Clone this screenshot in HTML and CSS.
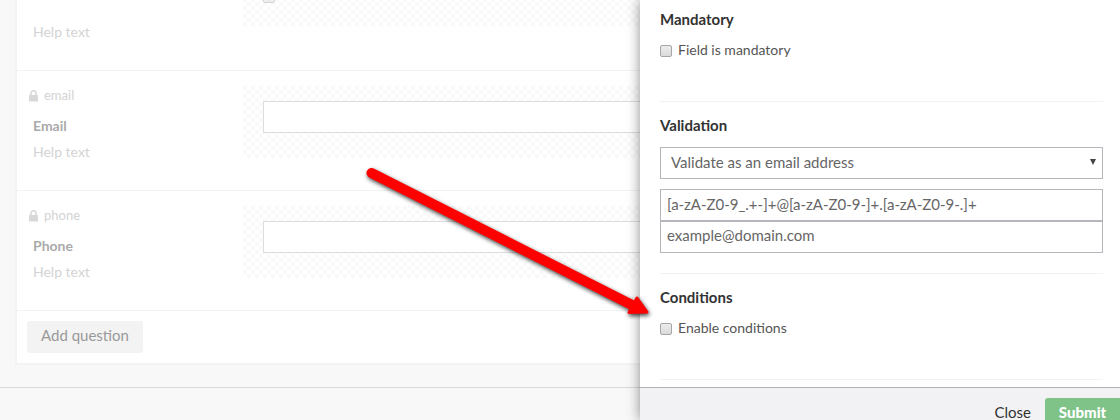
FILE: index.html
```html
<!DOCTYPE html>
<html lang="en">
<head>
<meta charset="utf-8">
<title>Form builder</title>
<link rel="stylesheet" href="styles.css">
</head>
<body>
<div class="app">
  <main class="builder">
    <section class="card">
      <div class="question question-first">
        <div class="question-text">
          <div class="alias"></div>
          <div class="label"></div>
          <div class="help">Help text</div>
        </div>
        <div class="preview preview-check"><span class="checkbox"></span></div>
      </div>
      <div class="question">
        <div class="question-text">
          <div class="alias"><svg class="lock" viewBox="0 0 9 12"><rect y="5" width="9" height="6.500" rx=".6"/><path d="M2 5.500V3.300a2.500 2.500 0 0 1 5 0V5.500" fill="none" stroke="#d8d8da" stroke-width="1.500"/></svg><span>email</span></div>
          <div class="label">Email</div>
          <div class="help">Help text</div>
        </div>
        <div class="preview"><div class="preview-input"></div></div>
      </div>
      <div class="question">
        <div class="question-text">
          <div class="alias"><svg class="lock" viewBox="0 0 9 12"><rect y="5" width="9" height="6.500" rx=".6"/><path d="M2 5.500V3.300a2.500 2.500 0 0 1 5 0V5.500" fill="none" stroke="#d8d8da" stroke-width="1.500"/></svg><span>phone</span></div>
          <div class="label">Phone</div>
          <div class="help">Help text</div>
        </div>
        <div class="preview"><div class="preview-input"></div></div>
      </div>
      <div class="actions"><button class="add">Add question</button></div>
    </section>
    <div class="builder-footer"></div>
  </main>
  <aside class="panel">
    <div class="settings">
      <section class="group group-mandatory">
        <h2>Mandatory</h2>
        <label class="check"><span class="checkbox"></span>Field is mandatory</label>
      </section>
      <section class="group group-validation">
        <h2>Validation</h2>
        <div class="field select"><span>Validate as an email address</span><svg class="caret" viewBox="0 0 6 6"><path d="M0 0h6L3 6z"/></svg></div>
        <div class="field">[a-zA-Z0-9_.+-]+@[a-zA-Z0-9-]+.[a-zA-Z0-9-.]+</div>
        <div class="field field-joined">example@domain.com</div>
      </section>
      <section class="group group-conditions">
        <h2>Conditions</h2>
        <label class="check"><span class="checkbox"></span>Enable conditions</label>
      </section>
    </div>
    <footer class="panel-footer"><button class="close">Close</button><button class="submit">Submit</button></footer>
  </aside>
</div>
<svg class="arrow" viewBox="0 0 1120 420">
  <path d="M371.500 173L634 306" stroke="#f00" stroke-width="10" stroke-linecap="round" fill="none"/>
  <path d="M637 298L647 312L629 312.500Z" fill="#f00" stroke="#f00" stroke-width="3" stroke-linejoin="round"/>
</svg>
</body>
</html>
```
FILE: styles.css
```css
* { box-sizing: border-box; }
body {
  margin: 0;
  overflow: hidden;
  background: #f8f8f8;
  font-family: Lato, sans-serif;
  font-size: 14px;
  font-variant-ligatures: common-ligatures discretionary-ligatures;
  color: #555;
}
button { border: 0; padding: 0; font-family: inherit; }
.app { display: flex; width: 1120px; height: 420px; overflow: hidden; }

.builder { width: 640px; height: 420px; display: flex; flex-direction: column; justify-content: flex-end; flex: none; }
.card {
  margin-left: 15px;
  height: 414px;
  flex: none;
  background: #fff;
  border: solid #f3f3f3;
  border-width: 0 0 2px 2px;
}
.question { display: flex; height: 120px; padding-top: 15px; border-bottom: 1px solid #f3f3f3; }
.question-text { width: 226px; padding-left: 16px; flex: none; line-height: 20px; }
.alias { display: flex; align-items: center; gap: 6px; height: 20px; margin: 0 0 10px -4px; font-size: 13px; color: #d3d3d3; }
.alias span { height: 20px; line-height: 18px; }
.lock { width: 9px; height: 12px; fill: #d8d8da; }
.label { height: 20px; margin-bottom: 6px; font-weight: 700; color: #aaa; }
.help { color: #d3d3d3; }
.preview {
  flex: 1;
  height: 72px;
  padding: 15px 0 0 20px;
  background: repeating-conic-gradient(#fff 0 25%, #f9f9f9 0 50%) 0 0 / 8px 8px;
}
.preview-input { height: 32px; background: #fff; border: solid #ddd; border-width: 1px 0 1px 1px; }
.preview-check { height: 60px; padding-top: 22px; }
.preview-check .checkbox { opacity: .45; }
.actions { padding: 10px; }
.add { width: 116px; height: 32px; padding-bottom: 3px; border-radius: 3px; background: #f3f3f3; color: #999; font-size: 15px; line-height: 29px; }
.builder-footer { height: 33px; margin-top: 22px; flex: none; border-top: 1px solid #d8d8d8; }

.panel { width: 480px; height: 420px; display: flex; flex-direction: column; flex: none; position: relative; background: #fff; box-shadow: 0 0 12px rgba(0, 0, 0, .45); }
.settings { height: 387px; padding: 0 17px 0 20px; }
.group { border-bottom: 1px solid #f2f2f2; }
.group-mandatory { height: 102px; padding-top: 9px; }
.group-validation { height: 172px; padding-top: 13px; }
.group-conditions { height: 106px; padding-top: 13px; }
h2 { margin: 0 0 10px; font-size: 15px; font-weight: 700; line-height: 20px; color: #333; }
.check { display: flex; align-items: center; gap: 6px; height: 20px; font-size: 14px; color: #555; }
.checkbox { display: block; width: 12px; height: 12px; margin-top: 3px; border: 1px solid #a6a6a6; border-radius: 2px; background: linear-gradient(#ececec, #dadada); }
.field { height: 32px; padding: 0 6px; border: 1px solid #b5b5bb; line-height: 29px; font-size: 15px; color: #666; white-space: nowrap; }
.select { display: flex; align-items: center; justify-content: space-between; padding: 0 6px 2px 10px; margin-bottom: 10px; }
.field-joined { line-height: 27px; }
.group-validation h2 { margin-bottom: 12px; }
.caret { width: 6px; height: 6px; fill: #444; }
.panel-footer { display: flex; justify-content: flex-end; gap: 14px; height: 33px; padding-top: 10px; background: #f2f2f4; border-top: 1px solid #b0b0b8; }
.close { height: 22px; background: none; font-size: 15px; line-height: 22px; padding-top: 3px; color: #333; }
.submit { width: 75px; height: 22px; background: #7fc389; border-radius: 3px 0 0 0; font-size: 15px; font-weight: 900; line-height: 19px; padding-top: 5px; color: #fff; }

.arrow { position: absolute; left: 0; top: 0; width: 1120px; height: 420px; pointer-events: none; filter: drop-shadow(1px 2px 2px rgba(0, 0, 0, .75)); }
```
